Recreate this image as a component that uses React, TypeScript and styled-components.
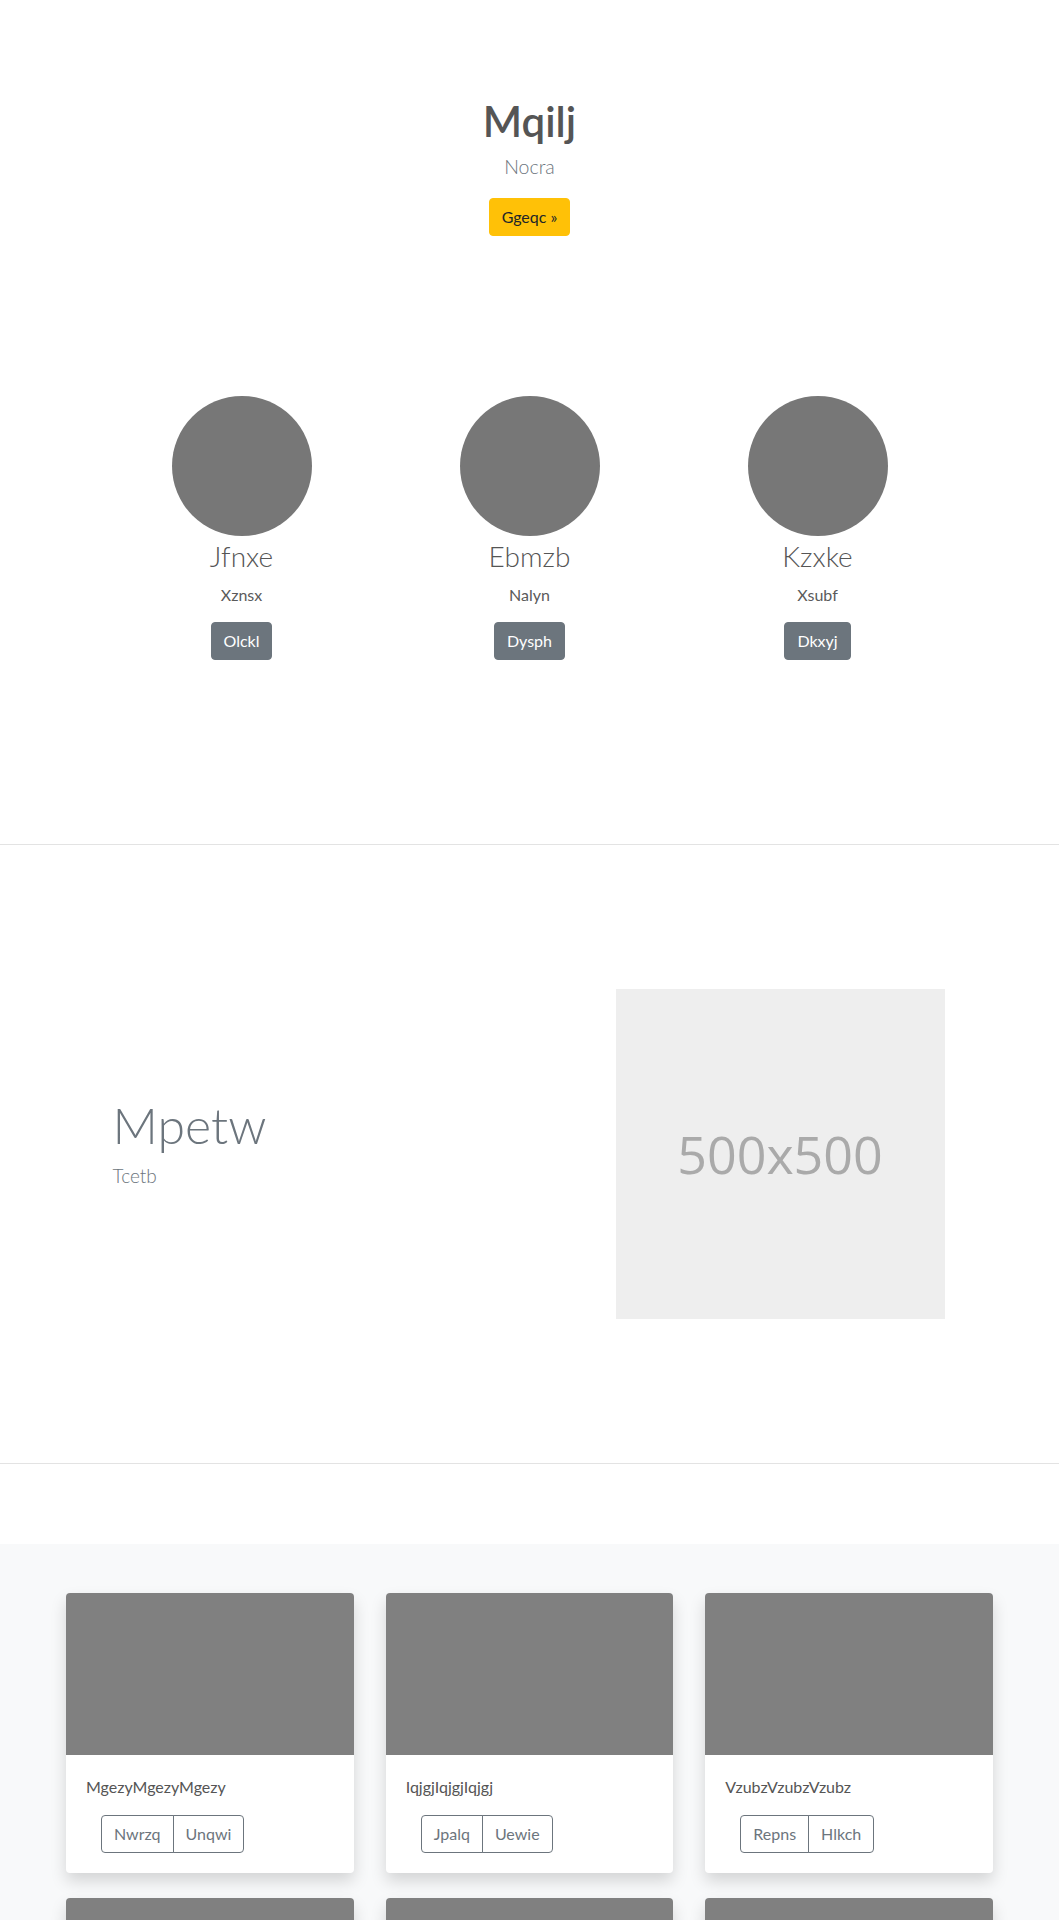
import React from "react";
import styled, { createGlobalStyle } from "styled-components";

const GlobalStyle = createGlobalStyle`
  html, body {
    margin: 0;
    padding: 0;
    background: #ffffff;
    font-family: Lato, "Segoe UI", "Noto Sans", sans-serif;
    color: #212529;
  }
  * { box-sizing: border-box; }
`;

const Hero = styled.section`
  padding-top: 97px;
  text-align: center;
`;

const HeroTitle = styled.h1`
  margin: 0 0 7px;
  font-size: 42px;
  line-height: 48px;
  font-weight: 600;
  color: #555555;
`;

const Lead = styled.p`
  margin: 0 0 16px;
  font-size: 19.5px;
  line-height: 30px;
  font-weight: 300;
  color: #6c757d;
`;

const Button = styled.button<{ $variant: "warning" | "secondary" }>`
  display: inline-block;
  padding: 6px 12px;
  font-family: inherit;
  font-size: 16px;
  line-height: 24px;
  border-radius: 4px;
  border: 1px solid ${(p) => (p.$variant === "warning" ? "#ffc107" : "#6c757d")};
  background: ${(p) => (p.$variant === "warning" ? "#ffc107" : "#6c757d")};
  color: ${(p) => (p.$variant === "warning" ? "#212529" : "#ffffff")};
  cursor: pointer;
`;

const Team = styled.section`
  padding: 160px 0 184px;
`;

const TeamGrid = styled.div`
  width: 864px;
  margin: 0 auto;
  display: grid;
  grid-template-columns: repeat(3, 1fr);
`;

const Member = styled.div`
  display: flex;
  flex-direction: column;
  align-items: center;
  text-align: center;
`;

const Avatar = styled.div`
  width: 140px;
  height: 140px;
  border-radius: 50%;
  background: #777777;
`;

const MemberName = styled.h3`
  margin: 4px 0 8px;
  font-size: 28px;
  line-height: 1.2;
  font-weight: 300;
  color: #555555;
`;

const MemberRole = styled.p`
  margin: 0 0 15px;
  font-size: 16px;
  line-height: 25px;
  font-weight: 400;
  color: #5a5a5a;
`;

const Divider = styled.hr`
  margin: 0;
  border: 0;
  border-top: 1px solid #e3e3e3;
`;

const Feature = styled.section`
  padding: 144px 0;
`;

const FeatureRow = styled.div`
  width: 864px;
  margin: 0 auto;
  padding: 0 15px;
  display: grid;
  grid-template-columns: 1fr 1fr;
  align-items: center;
`;

const FeatureText = styled.div`
  padding-bottom: 22px;
`;

const FeatureTitle = styled.h2`
  margin: 0;
  font-size: 50px;
  line-height: 1.2;
  font-weight: 300;
  color: #6c757d;
`;

const FeatureSub = styled.p`
  margin: 8px 0 0;
  font-size: 19px;
  line-height: 1.4;
  font-weight: 300;
  color: #6c757d;
`;

const Placeholder = styled.div`
  justify-self: end;
  margin-right: 2px;
  width: 329px;
  height: 330px;
  background: #eeeeee;
  display: flex;
  align-items: center;
  justify-content: center;
  font-family: "Open Sans", sans-serif;
  font-size: 52px;
  color: #aaaaaa;
`;

const Gallery = styled.section`
  margin-top: 80px;
  padding: 49px 0 48px;
  background: #f8f9fa;
`;

const CardGrid = styled.div`
  width: 927px;
  margin: 0 auto;
  display: grid;
  grid-template-columns: repeat(3, 1fr);
  column-gap: 32px;
  row-gap: 25px;
`;

const Card = styled.div`
  background: #ffffff;
  border-radius: 4px;
  overflow: hidden;
  box-shadow: 0 8px 16px rgba(0, 0, 0, 0.15);
`;

const CardImage = styled.div`
  height: 162px;
  background: #808080;
`;

const CardBody = styled.div`
  padding: 20px 20px 20px;
`;

const CardText = styled.p`
  margin: 0 0 16px;
  font-size: 16px;
  line-height: 24px;
  color: #555555;
`;

const BtnGroup = styled.div`
  display: inline-flex;
  margin-left: 15px;
`;

const OutlineBtn = styled.button`
  padding: 6px 12px;
  font-family: inherit;
  font-size: 16px;
  line-height: 24px;
  color: #6c757d;
  background: transparent;
  border: 1px solid #6c757d;
  cursor: pointer;
  &:first-child {
    border-radius: 4px 0 0 4px;
  }
  &:last-child {
    border-radius: 0 4px 4px 0;
    margin-left: -1px;
  }
`;

const members = [
  { name: "Jfnxe", role: "Xznsx", action: "Olckl" },
  { name: "Ebmzb", role: "Nalyn", action: "Dysph" },
  { name: "Kzxke", role: "Xsubf", action: "Dkxyj" },
];

const cards = [
  { text: "MgezyMgezyMgezy", a: "Nwrzq", b: "Unqwi" },
  { text: "IqjgjIqjgjIqjgj", a: "Jpalq", b: "Uewie" },
  { text: "VzubzVzubzVzubz", a: "Repns", b: "Hlkch" },
  { text: "OwtrnOwtrnOwtrn", a: "Bxqel", b: "Fmsad" },
  { text: "KplyeKplyeKplye", a: "Twoiz", b: "Gdnvu" },
  { text: "ErhacErhacErhac", a: "Sqmuy", b: "Lkvob" },
];

export default function App() {
  return (
    <>
      <GlobalStyle />
      <Hero>
        <HeroTitle>Mqilj</HeroTitle>
        <Lead>Nocra</Lead>
        <Button $variant="warning">Ggeqc »</Button>
      </Hero>

      <Team>
        <TeamGrid>
          {members.map((m) => (
            <Member key={m.name}>
              <Avatar />
              <MemberName>{m.name}</MemberName>
              <MemberRole>{m.role}</MemberRole>
              <Button $variant="secondary">{m.action}</Button>
            </Member>
          ))}
        </TeamGrid>
      </Team>

      <Divider />

      <Feature>
        <FeatureRow>
          <FeatureText>
            <FeatureTitle>Mpetw</FeatureTitle>
            <FeatureSub>Tcetb</FeatureSub>
          </FeatureText>
          <Placeholder>500x500</Placeholder>
        </FeatureRow>
      </Feature>

      <Divider />

      <Gallery>
        <CardGrid>
          {cards.map((c) => (
            <Card key={c.text}>
              <CardImage />
              <CardBody>
                <CardText>{c.text}</CardText>
                <BtnGroup>
                  <OutlineBtn>{c.a}</OutlineBtn>
                  <OutlineBtn>{c.b}</OutlineBtn>
                </BtnGroup>
              </CardBody>
            </Card>
          ))}
        </CardGrid>
      </Gallery>
    </>
  );
}
